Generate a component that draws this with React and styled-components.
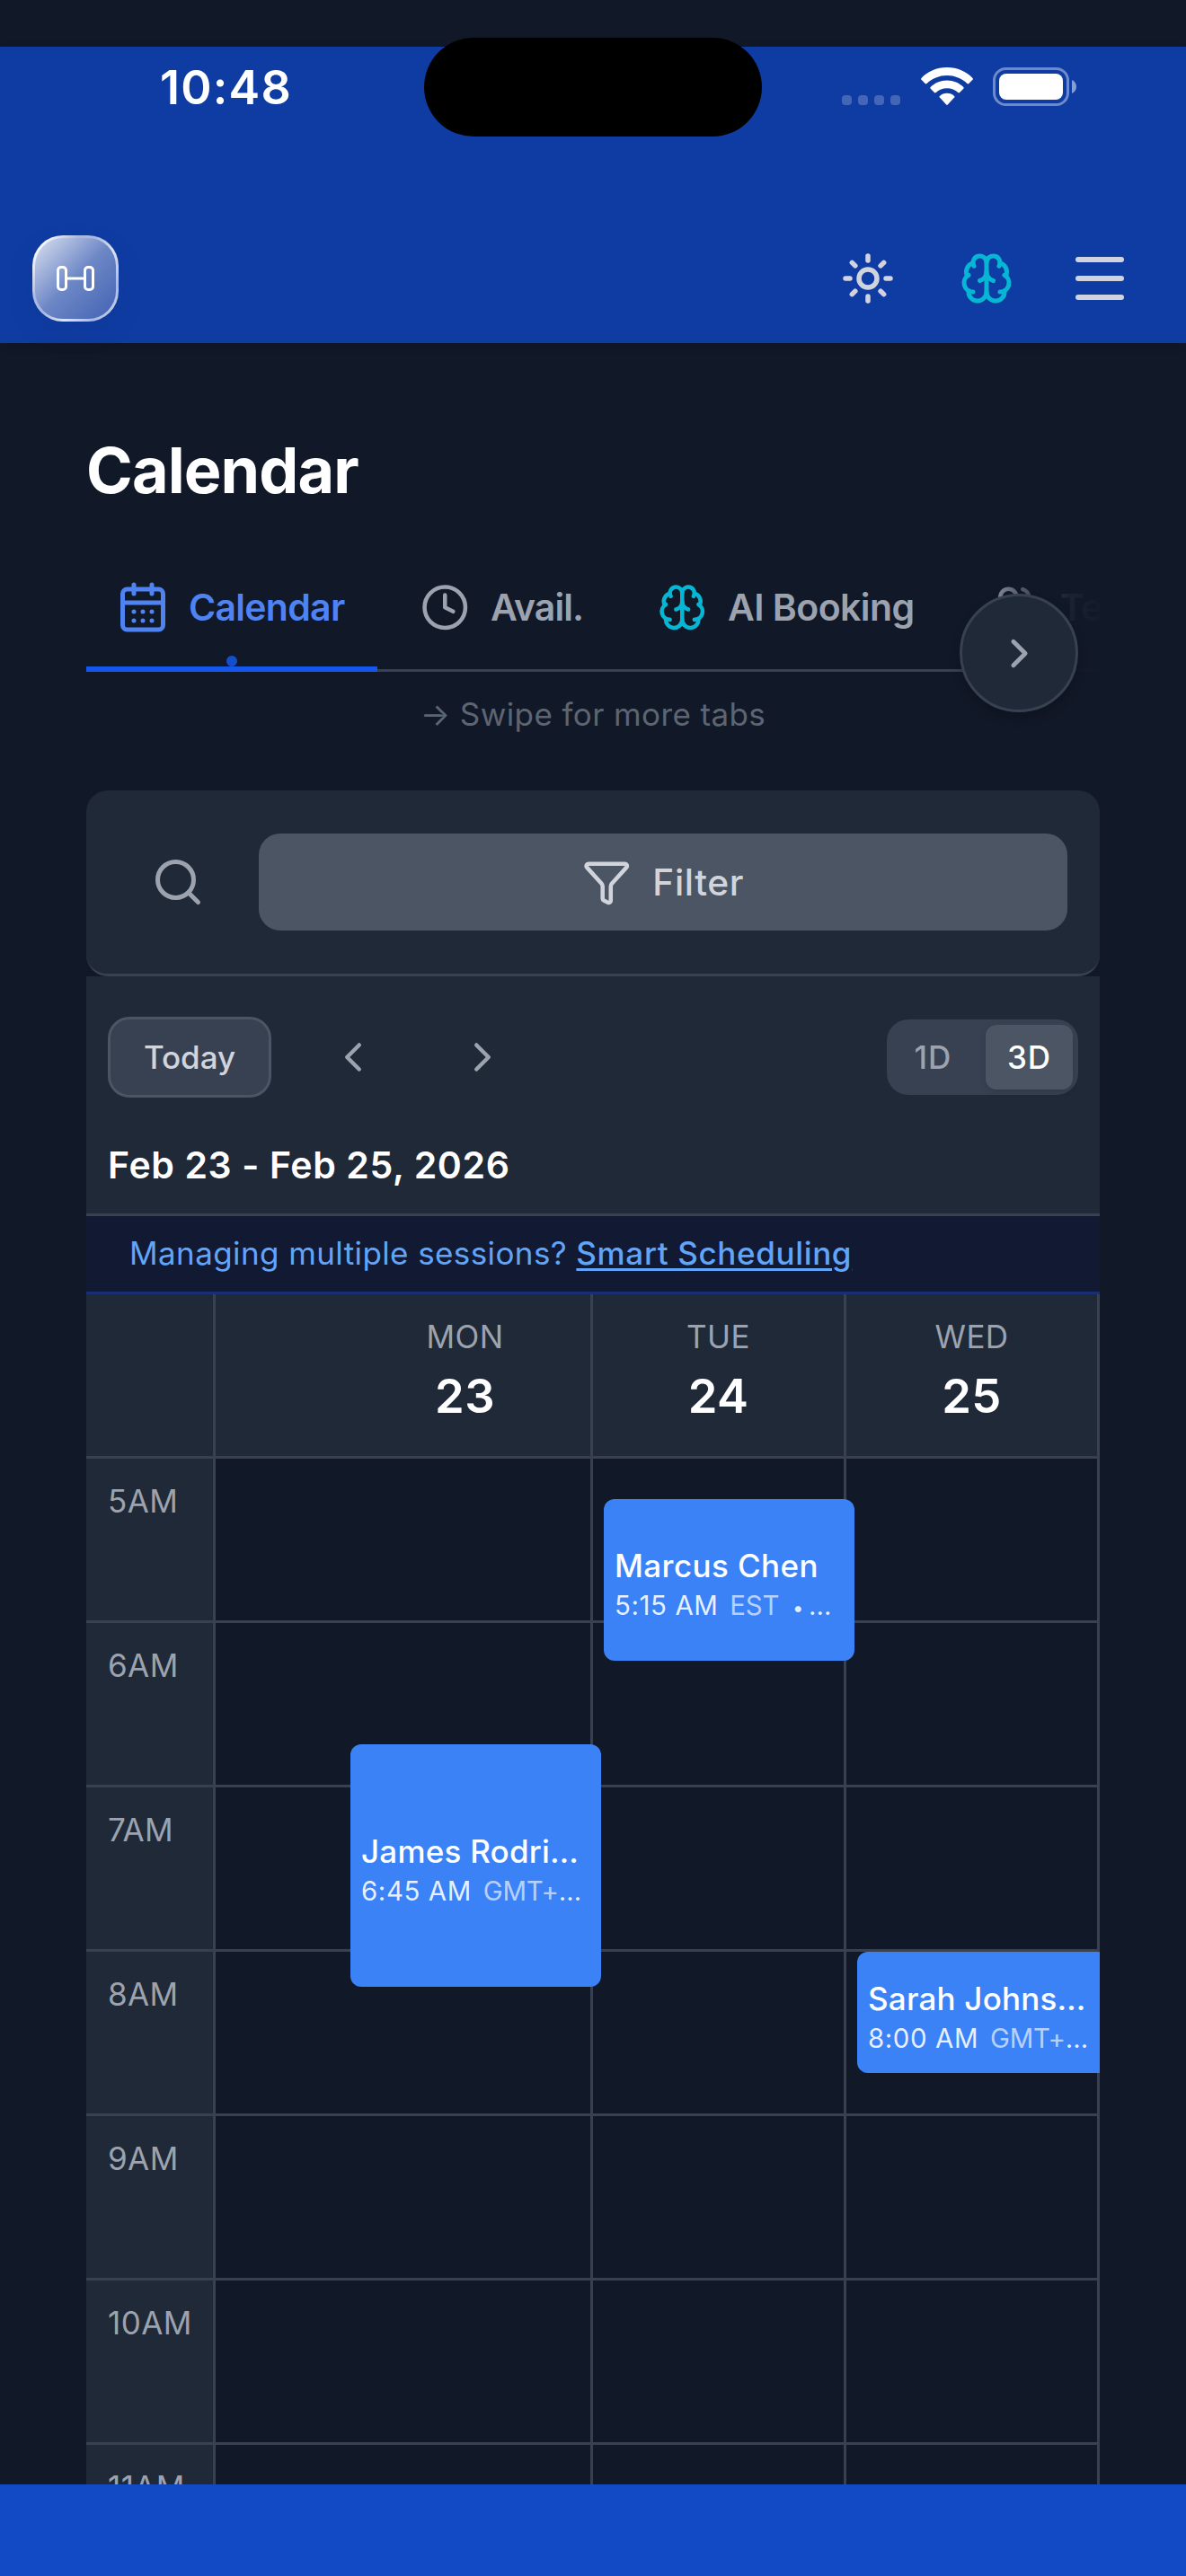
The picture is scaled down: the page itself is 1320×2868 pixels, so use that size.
import styled, { createGlobalStyle, css } from "styled-components";
import {
    Brain,
    CalendarDays,
    ChevronLeft,
    ChevronRight,
    Clock,
    Funnel,
    Search,
    Sun,
    Users,
} from "lucide-react";

const GlobalStyle = createGlobalStyle`
    * {
        box-sizing: border-box;
    }
    body {
        margin: 0;
        background-color: #111827;
        font-family: Inter, "Liberation Sans", sans-serif;
        color: #fff;
    }
    button {
        padding: 0;
        border: 0;
        background: none;
        font: inherit;
        color: inherit;
    }
`;

const HOUR_HEIGHT = 183;
const FIRST_HOUR = 5;

const Screen = styled.div`
    display: flex;
    flex-direction: column;
    width: 1320px;
    height: 2868px;
    padding-top: 52px;
    overflow: hidden;
    background-color: #111827;
`;

/* header */

const Header = styled.header`
    position: relative;
    display: flex;
    flex-direction: column;
    justify-content: space-between;
    height: 330px;
    flex-shrink: 0;
    background-color: #0f3ca3;
    box-shadow: 0 3px 9px rgba(0, 0, 0, 0.12);
`;

const Island = styled.div`
    position: absolute;
    top: -10px;
    left: 472px;
    width: 376px;
    height: 110px;
    border-radius: 55px;
    background-color: #000;
`;

const StatusBar = styled.div`
    display: flex;
    justify-content: space-between;
    align-items: center;
    height: 91px;
    padding: 0 121px 0 178px;
`;

const Time = styled.span`
    font-size: 52px;
    font-weight: 600;
    letter-spacing: 1.25px;
`;

const StatusIcons = styled.div`
    display: flex;
    align-items: flex-end;
    height: 43px;
    margin-bottom: 2px;
`;

const SignalDots = styled.div`
    display: flex;
    column-gap: 7px;
    margin: 0 23px 1px 0;

    span {
        width: 11px;
        height: 11px;
        border-radius: 4px;
        background-color: rgba(255, 255, 255, 0.22);
    }
`;

const WifiIcon = styled.svg`
    width: 58px;
    height: 42px;
    margin: 0 22.5px 1px 0;
`;

const BatteryIcon = styled.svg`
    width: 94px;
    height: 43px;
`;

const NavBar = styled.div`
    display: flex;
    justify-content: space-between;
    align-items: center;
    height: 144px;
    padding: 0 36px;
`;

const Logo = styled.div`
    display: flex;
    justify-content: center;
    align-items: center;
    width: 96px;
    height: 96px;
    border-radius: 34px;
    border: 3px solid transparent;
    background:
        linear-gradient(135deg, #d9e0f0 0%, #6d87c6 50%, #4263b3 100%)
            padding-box,
        linear-gradient(
                125deg,
                #f2f4fb 12%,
                #a9b9e0 32%,
                #a9b9e0 45%,
                #dde4f3 62%,
                #a9b9e0 82%,
                #d5ddf0 100%
            )
            border-box;
    box-shadow: 0 12px 24px rgba(15, 52, 140, 0.3);
`;

const NavActions = styled.div`
    display: flex;
`;

const NavButton = styled.button`
    display: flex;
    justify-content: center;
    align-items: center;
    width: ${(props) => props.$width || 132}px;
    height: 132px;
    color: ${(props) => props.$color || "#d1d5db"};
`;

const MenuLines = styled.span`
    display: flex;
    flex-direction: column;
    row-gap: 15px;

    span {
        width: 54px;
        height: 6px;
        border-radius: 3px;
        background-color: #d1d3df;
    }
`;

/* page */

const Main = styled.main`
    flex: 1;
    min-height: 0;
    overflow: hidden;
    padding: 97px 96px 0;
`;

const BottomBar = styled.div`
    flex-shrink: 0;
    height: 102px;
    background-color: #1249c4;
`;

const PageTitle = styled.h1`
    margin: 0 0 41px;
    line-height: 90px;
    font-size: 70px;
    font-weight: 700;
    letter-spacing: -0.89px;
`;

const TabsWrap = styled.div`
    position: relative;
`;

const TabList = styled.div`
    display: flex;
    column-gap: 12px;
    height: 138px;
    overflow: hidden;
    box-shadow: inset 0 -3px #374151;
`;

const Tab = styled.button`
    position: relative;
    display: flex;
    align-items: center;
    flex-shrink: 0;
    column-gap: 21px;
    width: ${(props) => props.$width}px;
    padding: 0 0 0 33px;
    border-bottom: 6px solid transparent;
    font-size: 41px;
    font-weight: 600;
    letter-spacing: ${(props) => props.$tracking || 0}px;
    color: #9ca3af;

    ${(props) =>
        props.$active &&
        css`
            color: #4f83f1;
            border-bottom-color: #1557eb;
        `}
`;

const TabIcon = styled.span`
    display: flex;
    justify-content: center;
    width: 60px;
    color: ${(props) => props.$color || "inherit"};
`;

const ActiveDot = styled.span`
    position: absolute;
    bottom: 0;
    left: 50%;
    width: 12px;
    height: 12px;
    margin-left: -6px;
    border-radius: 50%;
    background-color: #154ecb;
`;

const TabsFade = styled.div`
    position: absolute;
    top: 0;
    right: 0;
    width: 132px;
    height: 138px;
    background: linear-gradient(
        to right,
        rgba(17, 24, 39, 0),
        rgba(17, 24, 39, 0.55) 36%,
        rgba(17, 24, 39, 0.93) 74%,
        rgba(17, 24, 39, 0.98)
    );
`;

const ScrollButton = styled.button`
    position: absolute;
    top: 51px;
    right: 24px;
    display: flex;
    justify-content: center;
    align-items: center;
    width: 132px;
    height: 132px;
    border-radius: 50%;
    border: 3px solid #374151;
    background-color: #1f2937;
    color: #9ca3af;
    box-shadow: 0 6px 12px rgba(0, 0, 0, 0.2);
`;

const SwipeHint = styled.p`
    margin: 23px 0 61px;
    text-align: center;
    line-height: 48px;
    font-size: 35px;
    letter-spacing: 0.4px;
    color: #5d6472;
`;

const FilterCard = styled.section`
    display: flex;
    column-gap: 24px;
    height: 207px;
    padding: 48px 36px;
    border-radius: 24px;
    border-bottom: 3px solid #374151;
    background-color: #1f2937;
`;

const SearchButton = styled.button`
    display: flex;
    justify-content: center;
    align-items: center;
    width: 132px;
    height: 108px;
    color: #9ca3af;
`;

const FilterButton = styled.button`
    display: flex;
    flex: 1;
    justify-content: center;
    align-items: center;
    column-gap: 24px;
    height: 108px;
    border-radius: 24px;
    background-color: #4b5563;
    font-size: 40.7px;
    font-weight: 480;
    letter-spacing: 0.6px;
    color: #d1d5db;
`;

const CalendarPanel = styled.section`
    overflow: hidden;
    background-color: #111827;
`;

const Toolbar = styled.div`
    height: 267px;
    padding: 45px 24px 0;
    border-bottom: 3px solid #374151;
    background-color: #1f2937;
`;

const ToolbarRow = styled.div`
    display: flex;
    align-items: center;
    height: 90px;
`;

const TodayButton = styled.button`
    width: 182px;
    height: 90px;
    margin-right: 19px;
    padding-bottom: 1px;
    border-radius: 24px;
    border: 3px solid #4b5563;
    background-color: #374151;
    font-size: 35px;
    font-weight: 470;
    letter-spacing: -0.1px;
    color: #d1d5db;
`;

const StepButton = styled.button`
    display: flex;
    justify-content: center;
    align-items: center;
    width: 144px;
    height: 90px;
    color: #9ca3af;
`;

const ViewToggle = styled.div`
    display: flex;
    width: 213px;
    height: 84px;
    margin-left: auto;
    padding: 6px;
    border-radius: 24px;
    background-color: #374151;
`;

const ViewOption = styled.button`
    flex: 0 0 ${(props) => (props.$active ? 97 : 91)}px;
    margin-left: ${(props) => (props.$active ? 13 : 0)}px;
    border-radius: 12px;
    font-size: 35px;
    font-weight: 470;
    letter-spacing: 1px;
    color: #9ca3af;

    ${(props) =>
        props.$active &&
        css`
            color: #fff;
            background-color: #4b5563;
            box-shadow: 0 3px 6px rgba(0, 0, 0, 0.1);
        `}
`;

const DateRange = styled.h2`
    margin: 50px 0 0;
    line-height: 50px;
    font-size: 41px;
    font-weight: 600;
    letter-spacing: 0.62px;
`;

const Banner = styled.div`
    height: 87px;
    padding-left: 48px;
    border-bottom: 3px solid #1b2e72;
    background-color: #121a33;
    line-height: 82px;
    font-size: 35px;
    letter-spacing: 0.4px;
    color: #60a5fa;
`;

const BannerLink = styled.a`
    font-weight: 470;
    letter-spacing: 0.65px;
    text-decoration: underline;
    text-decoration-thickness: 3px;
    text-underline-offset: 4px;
`;

/* calendar grid */

const columns = css`
    display: grid;
    grid-template-columns: 144px 420px 282px 282px;
`;

const HeadRow = styled.div`
    ${columns}
    height: 183px;
    border-bottom: 3px solid #374151;
    background-color: #1f2937;
`;

const HeadCell = styled.div`
    padding: 23px 0 0 ${(props) => props.$inset || 0}px;
    border-right: 3px solid #374151;
    text-align: center;
`;

const DayName = styled.div`
    line-height: 48px;
    font-size: 35px;
    letter-spacing: 0.4px;
    color: #9ca3af;
`;

const DayNumber = styled.div`
    margin-top: 9px;
    line-height: 66px;
    font-size: 52.5px;
    font-weight: 600;
    letter-spacing: 0.4px;
`;

const Body = styled.div`
    ${columns}
`;

const TimeColumn = styled.div`
    border-right: 3px solid #374151;
    background-color: #1f2937;
`;

const TimeSlot = styled.div`
    height: ${HOUR_HEIGHT}px;
    padding: 24px 0 0 24px;
    border-bottom: 3px solid #374151;
    line-height: 46px;
    font-size: 35px;
    letter-spacing: 0.4px;
    color: #9ca3af;
`;

const DayColumn = styled.div`
    position: relative;
    border-right: 3px solid #374151;
`;

const Slot = styled.div`
    height: ${HOUR_HEIGHT}px;
    border-bottom: 3px solid #374151;
`;

/* sits over the slots, positioned by start time */
const Event = styled.div`
    position: absolute;
    z-index: 1;
    left: ${(props) => props.$inset + 12}px;
    width: 279px;
    display: flex;
    flex-direction: column;
    justify-content: center;
    padding: 10px 12px 0;
    border-radius: 12px;
    background-color: #3b82f6;
    white-space: nowrap;
`;

const EventName = styled.div`
    line-height: 48px;
    font-size: 35px;
    font-weight: 470;
    letter-spacing: ${(props) => props.$tracking}px;
`;

const EventTime = styled.div`
    line-height: 42px;
    font-size: 29.4px;
    letter-spacing: 0.6px;
    color: rgba(255, 255, 255, 0.9);
`;

const Zone = styled.span`
    margin-left: 4px;
    letter-spacing: -0.2px;
    color: rgba(255, 255, 255, 0.65);
`;

const Bullet = styled.span`
    margin: 0 5px 0 6px;
    font-size: 22px;
    line-height: 1;
`;

const days = [
    {
        name: "MON",
        number: 23,
        inset: 138,
        event: {
            name: "James Rodri…",
            time: "6:45 AM",
            zone: "GMT+",
            tracking: 0.22,
            top: 318,
            height: 270,
        },
    },
    {
        name: "TUE",
        number: 24,
        inset: 0,
        event: {
            name: "Marcus Chen",
            time: "5:15 AM",
            zone: "EST",
            bullet: true,
            tracking: 0.4,
            top: 45,
            height: 180,
        },
    },
    {
        name: "WED",
        number: 25,
        inset: 0,
        event: {
            name: "Sarah Johns…",
            time: "8:00 AM",
            zone: "GMT+",
            tracking: 0.2,
            top: 549,
            height: 135,
        },
    },
];

const hours = Array.from({ length: 7 }, (_, i) => FIRST_HOUR + i);

function Wifi() {
    return (
        <WifiIcon viewBox="0 0 58 42" fill="#fff">
            <path d="M29 0C17.6 0 7.300 4.600 .5 12a1.300 1.300 0 0 0 0 1.800l4.200 4.300a1.300 1.300 0 0 0 1.800 0C12.300 12.400 20.200 9 29 9s16.700 3.400 22.500 9.100a1.300 1.300 0 0 0 1.800 0l4.200-4.300a1.300 1.300 0 0 0 0-1.800C50.700 4.600 40.400 0 29 0z" />
            <path d="M29 14.500c-7.200 0-13.700 2.900-18.300 7.500a1.200 1.200 0 0 0 0 1.700l4.300 4.300a1.200 1.200 0 0 0 1.700 0C19.900 25.100 24.200 23.300 29 23.300s9.100 1.800 12.300 4.700a1.200 1.200 0 0 0 1.700 0l4.300-4.300a1.200 1.200 0 0 0 0-1.700C42.700 17.400 36.200 14.500 29 14.500z" />
            <path d="M29 28.800c-3.200 0-6 1.200-8.100 3.100a1.100 1.100 0 0 0 0 1.700l7.300 7.900a1.100 1.100 0 0 0 1.600 0l7.300-7.900a1.100 1.100 0 0 0 0-1.700C35 30 32.200 28.800 29 28.800z" />
        </WifiIcon>
    );
}

function Battery() {
    return (
        <BatteryIcon viewBox="0 0 94 43" fill="#fff">
            <rect
                x="1.5"
                y="1.5"
                width="82"
                height="40"
                rx="13"
                fill="none"
                stroke="#fff"
                strokeWidth="3"
                opacity="0.4"
            />
            <rect x="7" y="7" width="71" height="29" rx="8" />
            <path d="M88 14c3 1.300 5 4 5 7.500s-2 6.200-5 7.500z" opacity="0.5" />
        </BatteryIcon>
    );
}

function Dumbbell() {
    return (
        <svg
            width="44"
            height="30"
            viewBox="0 0 44 30"
            fill="none"
            stroke="#fff"
            strokeWidth="3"
        >
            <rect x="2.5" y="2.5" width="9" height="25" rx="3.5" />
            <rect x="32.5" y="2.5" width="9" height="25" rx="3.5" />
            <path d="M11.500 15h21" />
        </svg>
    );
}

function App() {
    return (
        <Screen>
            <GlobalStyle />
            <Header>
                <StatusBar>
                    <Time>10:48</Time>
                    <StatusIcons>
                        <SignalDots>
                            <span />
                            <span />
                            <span />
                            <span />
                        </SignalDots>
                        <Wifi />
                        <Battery />
                    </StatusIcons>
                </StatusBar>
                <Island />
                <NavBar>
                    <Logo>
                        <Dumbbell />
                    </Logo>
                    <NavActions>
                        <NavButton $color="#d1d3df">
                            <Sun size={60} strokeWidth={2.2} />
                        </NavButton>
                        <NavButton $color="#06b6d4">
                            <Brain size={60} />
                        </NavButton>
                        <NavButton $width={120}>
                            <MenuLines>
                                <span />
                                <span />
                                <span />
                            </MenuLines>
                        </NavButton>
                    </NavActions>
                </NavBar>
            </Header>

            <Main>
                <PageTitle>Calendar</PageTitle>
                <TabsWrap>
                    <TabList>
                        <Tab $active $width={324} $tracking={-0.72}>
                            <TabIcon>
                                <CalendarDays size={60} />
                            </TabIcon>
                            Calendar
                            <ActiveDot />
                        </Tab>
                        <Tab $width={252} $tracking={-0.95}>
                            <TabIcon>
                                <Clock size={54.5} />
                            </TabIcon>
                            Avail.
                        </Tab>
                        <Tab $width={358} $tracking={-0.57}>
                            <TabIcon $color="#06b6d4">
                                <Brain size={54.5} />
                            </TabIcon>
                            AI Booking
                        </Tab>
                        <Tab $width={300} $tracking={-0.6}>
                            <TabIcon>
                                <Users size={54.5} />
                            </TabIcon>
                            Team
                        </Tab>
                    </TabList>
                    <TabsFade />
                    <ScrollButton>
                        <ChevronRight size={53} strokeWidth={2.2} />
                    </ScrollButton>
                </TabsWrap>
                <SwipeHint>→ Swipe for more tabs</SwipeHint>

                <FilterCard>
                    <SearchButton>
                        <Search size={60} />
                    </SearchButton>
                    <FilterButton>
                        <Funnel size={54.5} />
                        Filter
                    </FilterButton>
                </FilterCard>

                <CalendarPanel>
                    <Toolbar>
                        <ToolbarRow>
                            <TodayButton>Today</TodayButton>
                            <StepButton>
                                <ChevronLeft size={54} />
                            </StepButton>
                            <StepButton>
                                <ChevronRight size={54} />
                            </StepButton>
                            <ViewToggle>
                                <ViewOption>1D</ViewOption>
                                <ViewOption $active>3D</ViewOption>
                            </ViewToggle>
                        </ToolbarRow>
                        <DateRange>Feb 23 - Feb 25, 2026</DateRange>
                    </Toolbar>
                    <Banner>
                        Managing multiple sessions?{" "}
                        <BannerLink>Smart Scheduling</BannerLink>
                    </Banner>
                    <HeadRow>
                        <HeadCell />
                        {days.map((day) => (
                            <HeadCell key={day.name} $inset={day.inset}>
                                <DayName>{day.name}</DayName>
                                <DayNumber>{day.number}</DayNumber>
                            </HeadCell>
                        ))}
                    </HeadRow>
                    <Body>
                        <TimeColumn>
                            {hours.map((hour) => (
                                <TimeSlot key={hour}>{hour}AM</TimeSlot>
                            ))}
                        </TimeColumn>
                        {days.map(({ name, inset, event }) => (
                            <DayColumn key={name}>
                                {hours.map((hour) => (
                                    <Slot key={hour} />
                                ))}
                                <Event
                                    $inset={inset}
                                    style={{
                                        top: event.top,
                                        height: event.height,
                                    }}
                                >
                                    <EventName $tracking={event.tracking}>
                                        {event.name}
                                    </EventName>
                                    <EventTime>
                                        {event.time} <Zone>{event.zone}</Zone>
                                        {event.bullet && (
                                            <>
                                                {" "}
                                                <Bullet>•</Bullet>
                                            </>
                                        )}
                                        …
                                    </EventTime>
                                </Event>
                            </DayColumn>
                        ))}
                    </Body>
                </CalendarPanel>
            </Main>
            <BottomBar />
        </Screen>
    );
}

export default App;
